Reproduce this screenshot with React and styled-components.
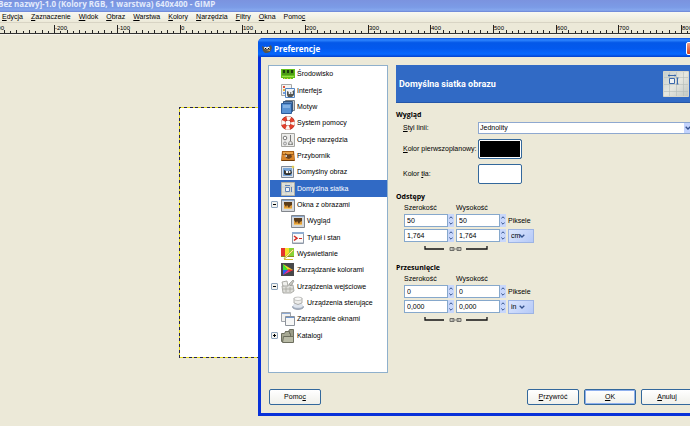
import React from 'react';
import { styled, createGlobalStyle } from 'styled-components';

const GlobalStyle = createGlobalStyle`
  * {
    box-sizing: border-box;
  }
  body {
    margin: 0;
    overflow: hidden;
    background-color: #ece9d8;
    color: #000000;
    font-family: 'Liberation Sans', Arial, sans-serif;
    font-size: 7px;
    line-height: 10px;
  }
  button,
  input,
  select {
    margin: 0;
    padding: 0;
    font: inherit;
    color: inherit;
  }
`;

const MENU = [
  ['', 'E', 'dycja'],
  ['', 'Z', 'aznaczenie'],
  ['', 'W', 'idok'],
  ['', 'O', 'braz'],
  ['', 'W', 'arstwa'],
  ['', 'K', 'olory'],
  ['', 'N', 'arzędzia'],
  ['', 'F', 'iltry'],
  ['', 'O', 'kna'],
  ['Pomo', 'c', ''],
];

const TREE = [
  { icon: 'board', label: 'Środowisko' },
  { icon: 'interface', label: 'Interfejs' },
  { icon: 'theme', label: 'Motyw' },
  { icon: 'help', label: 'System pomocy' },
  { icon: 'options', label: 'Opcje narzędzia' },
  { icon: 'toolbox', label: 'Przybornik' },
  { icon: 'image', label: 'Domyślny obraz' },
  { icon: 'grid', label: 'Domyślna siatka', selected: true },
  { icon: 'picture', label: 'Okna z obrazami', toggle: 'minus' },
  { icon: 'picture', label: 'Wygląd', child: true },
  { icon: 'title', label: 'Tytuł i stan', child: true },
  { icon: 'display', label: 'Wyświetlanie' },
  { icon: 'colors', label: 'Zarządzanie kolorami' },
  { icon: 'input', label: 'Urządzenia wejściowe', toggle: 'minus' },
  { icon: 'controller', label: 'Urządzenia sterujące', child: true },
  { icon: 'windows', label: 'Zarządzanie oknami' },
  { icon: 'folders', label: 'Katalogi', toggle: 'plus' },
];

const ICONS = {
  board: (
    <>
      <path d="M0 2h14v9h-2v1H2v-1H0z" fill="#64c018" />
      <path d="M1 3h12v5H1z" fill="#4c9c14" />
      <path d="M2 3h2v3H2zM6 3h2v3H6zM10 3h2v3h-2z" fill="#1d3c0c" />
      <path d="M1 9h12v1H1z" fill="#9ae048" />
      <path d="M3 11h1v1H3zM6 11h1v1H6zM9 11h1v1H9z" fill="#e4c834" />
    </>
  ),
  interface: (
    <>
      <path d="M.5 0.500h10v11H.5z" fill="#f4f4f2" stroke="#a8a8a8" />
      <path d="M2 2h2v2H2z" fill="#e05038" />
      <path d="M2 5h2v2H2z" fill="#e8b23c" />
      <path d="M2 8h2v2H2z" fill="#7aa0dc" />
      <path d="M4.500 4.500h9v9h-9z" fill="#f2f4f8" stroke="#5487c4" />
      <path d="M6 7l2 1h3l2-2v5l-2 2H7l-1-2z" fill="#555550" />
      <circle cx="8.500" cy="9" r="1" fill="#fff" />
      <circle cx="11" cy="9" r="1" fill="#fff" />
    </>
  ),
  theme: (
    <>
      <path d="M4.500 0.500h9v10h-9z" fill="#c9ccd0" stroke="#7d8288" />
      <path d="M2.500 1.500h9v10h-9z" fill="#5e86b8" stroke="#35567e" />
      <path d="M.5 3.500h10v10H.5z" fill="#5a93d4" stroke="#2d5d9c" />
      <path d="M2 5h7v3H2z" fill="#83b1e4" />
    </>
  ),
  help: (
    <>
      <circle cx="7" cy="7" r="4.800" fill="none" stroke="#8a2018" strokeWidth="4.400" />
      <circle cx="7" cy="7" r="4.800" fill="none" stroke="#e4402c" strokeWidth="3.600" />
      <circle
        cx="7"
        cy="7"
        r="4.800"
        fill="none"
        stroke="#fbf6f0"
        strokeWidth="4"
        strokeDasharray="3.600 3.940"
        strokeDashoffset="1.800"
      />
    </>
  ),
  options: (
    <>
      <path d="M.5 0.500h13v13H.5z" fill="#ececea" stroke="#a4a4a0" />
      <circle cx="4" cy="5" r="1.800" fill="#fff" stroke="#777" />
      <circle cx="4" cy="10.500" r="1.500" fill="#ddd" stroke="#999" />
      <path d="M9.500 2v6" stroke="#777" />
      <path d="M7 12c0-3 1-4 2.500-4S12 9 12 12z" fill="#8a8a86" />
      <circle cx="9.500" cy="10" r="1.200" fill="#e8e8e8" />
    </>
  ),
  toolbox: (
    <>
      <path d="M1 2h12l1 10H0z" fill="#a85f14" />
      <path d="M2 3h10v2H2z" fill="#e8a044" />
      <path d="M1 6h12v5H1z" fill="#d98428" />
      <path d="M4 4l3 2 3-1 1 3-3 2-3-1z" fill="#6b4420" />
      <path d="M3 7l3-1v2z" fill="#dce4ec" />
      <path d="M1 11h12v1H1z" fill="#6e3c0c" />
    </>
  ),
  image: (
    <>
      <path d="M.5 1.500h12v11H.5z" fill="#dfe3e8" stroke="#7c8796" />
      <path d="M2 3h9v8H2z" fill="#7aa6d8" />
      <path d="M3 5l2 1h3l2-1 1 3-2 2H5L3 9z" fill="#33332f" />
      <circle cx="6" cy="7" r="1.200" fill="#fff" />
      <circle cx="8.600" cy="7" r="1" fill="#fff" />
      <path d="M12 0l.6 1.400L14 2l-1.400.6L12 4l-.6-1.400L10 2l1.400-.6z" fill="#f5d83c" />
    </>
  ),
  grid: (
    <>
      <path d="M.5 0.500h13v13H.5z" fill="#dfe1da" stroke="#aeb0a8" />
      <path d="M1 5h12M1 10h12M5 1v12M10 1v12" stroke="#bfc2ba" strokeWidth=".5" />
      <path d="M4.500 5.500h4v4h-4z" fill="#f1f4f6" stroke="#5f83b8" />
      <path d="M4 3.500h5M10.500 5v5" stroke="#5f83b8" />
    </>
  ),
  picture: (
    <>
      <path d="M.5 1.500h13v12H.5z" fill="#d6d9dd" stroke="#82868c" />
      <path d="M1 2h12v1H1z" fill="#8ca8cc" />
      <path d="M3 4h8v7H3z" fill="#e09a38" />
      <path d="M3 4h8v3L9 8 8 10 6 7 5 9 3 6z" fill="#5a3c1a" />
      <path d="M3 10h8v1H3z" fill="#f3c464" />
    </>
  ),
  title: (
    <>
      <path d="M1.500 1.500h11v11h-11z" fill="#fbfbfb" stroke="#8f99a8" />
      <path d="M1 1h12v2H1z" fill="#8fadd2" />
      <path d="M3 5l3 2.200L3 9.500" fill="none" stroke="#d42a22" strokeWidth="1.500" />
      <path d="M8 7.500h3" stroke="#d42a22" />
      <path d="M2 11h10v1H2z" fill="#c9ced6" />
    </>
  ),
  display: (
    <>
      <path d="M0 1h13v9H0z" fill="#8a8a20" />
      <path d="M0 1h5v8H0z" fill="#e4342c" />
      <path d="M4 1h5v8H4z" fill="#f4e028" />
      <path d="M8 1h5v8H8z" fill="#86d438" />
      <path d="M13 3L5 11l-2 1 1-2 8-8z" fill="#f8f4a0" stroke="#b09c20" strokeWidth=".6" />
      <path d="M3 12h9v1H3z" fill="#d6bc30" />
    </>
  ),
  colors: (
    <>
      <path d="M0 0h13v13H0z" fill="#47484a" />
      <path d="M2 1v6h5z" fill="#38e434" />
      <path d="M2 1l10 6H7z" fill="#e8e024" />
      <path d="M2 7v5l5-5z" fill="#2b60f0" />
      <path d="M2 12l10-5H7z" fill="#e82ca0" />
      <path d="M7 6l5 1-4 2z" fill="#f03420" />
    </>
  ),
  input: (
    <>
      <path d="M1 6l4-1h7l1 6-3 2H2z" fill="#dededa" stroke="#9a9a94" strokeWidth=".8" />
      <path d="M1 2l5-1 1 5H2z" fill="#efefec" stroke="#9a9a94" strokeWidth=".8" />
      <path d="M8 4l4-4 1 1-3 5z" fill="#c4c4be" stroke="#8a8a84" strokeWidth=".6" />
      <path d="M5 7v5M9 7v5M2 9h10" stroke="#a6a6a0" strokeWidth=".8" />
    </>
  ),
  controller: (
    <>
      <ellipse cx="7" cy="11" rx="5.500" ry="2.500" fill="#a9b4c4" stroke="#7c8798" strokeWidth=".6" />
      <ellipse cx="7" cy="9.500" rx="5" ry="2.300" fill="#dfe5ee" />
      <path d="M3 2h8v5q-4 3-8 0z" fill="#ededeb" stroke="#9c9c9a" strokeWidth=".8" />
      <ellipse cx="7" cy="2.800" rx="3.800" ry="1.800" fill="#f9f9f8" stroke="#a9a9a6" strokeWidth=".6" />
    </>
  ),
  windows: (
    <>
      <path d="M.5 0.500h9v9h-9z" fill="#f2f2f0" stroke="#a0a4aa" />
      <path d="M1 1h8v1H1z" fill="#8fabd4" />
      <path d="M4.500 4.500h9v9h-9z" fill="#f7f7f6" stroke="#8d939b" />
      <path d="M5 5h8v1H5z" fill="#6f97ce" />
    </>
  ),
  folders: (
    <>
      <path d="M4.500 2.500h3l1-2h4v8h-8z" fill="#9a9c88" stroke="#6c6e5e" />
      <path d="M.5 4.500h3l1-2h4v2h1v8h-9z" fill="#a7a994" stroke="#6c6e5e" />
      <path d="M2.500 7.500h10v6h-11z" fill="#b9bba6" stroke="#6c6e5e" />
    </>
  ),
};

function Icon({ name }) {
  return (
    <svg width="14" height="14" viewBox="0 0 14 14" aria-hidden="true">
      {ICONS[name]}
    </svg>
  );
}

function GridPicture() {
  return (
    <svg width="26" height="26" viewBox="0 0 26 26" aria-hidden="true">
      <defs>
        <linearGradient id="paper" x1="0" y1="0" x2="1" y2="1">
          <stop offset="0" stopColor="#c6cfce" />
          <stop offset=".5" stopColor="#e6e7e0" />
          <stop offset="1" stopColor="#bfc6c2" />
        </linearGradient>
      </defs>
      <path d="M.5.5h25v25H.5z" fill="url(#paper)" stroke="#d8d6c8" />
      <path
        d="M1 6.500h24M1 13.500h24M1 20.500h24M6.500 1v24M13.500 1v24M20.500 1v24"
        stroke="#b4bcb8"
        strokeWidth=".6"
      />
      <path d="M6.500 7.500h5v5h-5z" fill="#eef2f4" stroke="#3a68ac" />
      <path d="M5 4.500h8M6 3.500v2M12 3.500v2M14.500 7v6M13.500 7h2M13.500 13h2" stroke="#3a68ac" />
    </svg>
  );
}

function Wilber() {
  return (
    <svg width="10" height="10" viewBox="0 0 10 10" aria-hidden="true">
      <path d="M0 2l2 1h4l3-2 1 3-2 4-3 1H3L1 7z" fill="#59564c" />
      <circle cx="3.500" cy="4" r="1.300" fill="#fff" />
      <circle cx="6.300" cy="4" r="1.300" fill="#fff" />
      <path d="M3 4h1v1H3zM6 4h1v1H6z" fill="#000" />
      <path d="M4 7l4-1v1z" fill="#d9a860" />
    </svg>
  );
}

// 100 image pixels take 62.7 screen pixels at this zoom
const STEP = 62.7;
const ORIGIN = 179.5;

function Ruler() {
  const marks = [];
  for (let i = -30; i < 82; i += 1) {
    const x = Math.round(ORIGIN + (i * STEP) / 10);
    const height = i % 10 === 0 ? 8 : i % 2 === 0 ? 3 : 2;
    marks.push(<rect key={i} x={x} y={10 - height} width="1" height={height} fill="#222" />);
    if (i % 10 === 0) {
      marks.push(
        <text key={`t${i}`} x={x + 1} y="7" fontSize="6">
          {i * 10}
        </text>
      );
    }
  }
  return <StRuler aria-hidden="true">{marks}</StRuler>;
}

function TreeRow({ item }) {
  return (
    <StRow $selected={item.selected} $child={item.child}>
      <StToggleCell>
        {item.toggle && (
          <StToggle type="button" aria-label={item.label}>
            <svg width="5" height="5" viewBox="0 0 5 5">
              <path
                d={item.toggle === 'plus' ? 'M1 2.500h3M2.500 1v3' : 'M1 2.500h3'}
                stroke="#000"
              />
            </svg>
          </StToggle>
        )}
      </StToggleCell>
      <Icon name={item.icon} />
      <span>{item.label}</span>
    </StRow>
  );
}

function SpinEntry({ label, value }) {
  return (
    <StSpin>
      <StInput type="text" aria-label={label} defaultValue={value} />
      <StSpinButtons>
        <StSpinButton type="button" aria-label={`${label} +`}>
          <svg width="4" height="3" viewBox="0 0 4 3">
            <path d="M.3 2.500L2 .8l1.700 1.700" fill="none" stroke="#34518c" />
          </svg>
        </StSpinButton>
        <StSpinButton type="button" aria-label={`${label} -`}>
          <svg width="4" height="3" viewBox="0 0 4 3">
            <path d="M.3.5L2 2.200 3.700.5" fill="none" stroke="#34518c" />
          </svg>
        </StSpinButton>
      </StSpinButtons>
    </StSpin>
  );
}

function SizeGroup({ title, pixels, value, unit }) {
  return (
    <section>
      <StSectionTitle>{title}</StSectionTitle>
      <StSizeGrid>
        <span>Szerokość</span>
        <span>Wysokość</span>
        <span />
        <SpinEntry label="Szerokość" value={pixels} />
        <SpinEntry label="Wysokość" value={pixels} />
        <span>Piksele</span>
        <SpinEntry label="Szerokość" value={value} />
        <SpinEntry label="Wysokość" value={value} />
        <StUnit>
          <StUnitSelect aria-label={title} defaultValue={unit}>
            <option>{unit}</option>
          </StUnitSelect>
          <StUnitArrow>
            <Chevron />
          </StUnitArrow>
        </StUnit>
      </StSizeGrid>
      <StChain type="button" aria-label={title}>
        <svg width="64" height="8" viewBox="0 0 64 8">
          <path d="M1 1v3h19M63 1v3H42" fill="none" stroke="#111" strokeWidth="1.300" />
          <path d="M26 2.500h4v3h-4zM33 2.500h4v3h-4z" fill="#c9c8c0" stroke="#6f6f6a" />
          <path d="M28 4h7" stroke="#8a8a84" />
        </svg>
      </StChain>
    </section>
  );
}

function Chevron() {
  return (
    <svg width="6" height="4" viewBox="0 0 6 4" aria-hidden="true">
      <path d="M.7.7L3 3 5.300.7" fill="none" stroke="#34518c" strokeWidth="1.300" />
    </svg>
  );
}

function Preferences() {
  return (
    <StDialog role="dialog" aria-label="Preferencje">
      <StDialogBar>
        <Wilber />
        <StDialogTitle>Preferencje</StDialogTitle>
        <StClose type="button" aria-label="Zamknij" />
      </StDialogBar>
      <StDialogBody>
        <StColumns>
          <StTree>
            {TREE.map((item) => (
              <TreeRow key={item.label} item={item} />
            ))}
          </StTree>
          <StPage>
            <StBanner>
              <StBannerTitle>Domyślna siatka obrazu</StBannerTitle>
              <GridPicture />
            </StBanner>
            <StSectionTitle>Wygląd</StSectionTitle>
            <StForm>
              <label htmlFor="line-style">
                <u>S</u>tyl linii:
              </label>
              <StCombo>
                <StComboSelect id="line-style" defaultValue="Jednolity">
                  <option>Jednolity</option>
                </StComboSelect>
                <StComboArrow>
                  <Chevron />
                </StComboArrow>
              </StCombo>
              <label htmlFor="foreground">
                <u>K</u>olor pierwszoplanowy:
              </label>
              <StSwatch id="foreground" type="button" $color="#000000" />
              <label htmlFor="background">
                Kolor <u>t</u>ła:
              </label>
              <StSwatch id="background" type="button" $color="#ffffff" />
            </StForm>
            <SizeGroup title="Odstępy" pixels="50" value="1,764" unit="cm" />
            <SizeGroup title="Przesunięcie" pixels="0" value="0,000" unit="in" />
          </StPage>
        </StColumns>
        <StActions>
          <StButton type="button">
            Pomo<u>c</u>
          </StButton>
          <StActionGroup>
            <StButton type="button">
              <u>P</u>rzywróć
            </StButton>
            <StButton type="button" $primary>
              <u>O</u>K
            </StButton>
            <StButton type="button">
              <u>A</u>nuluj
            </StButton>
          </StActionGroup>
        </StActions>
      </StDialogBody>
    </StDialog>
  );
}

function App() {
  return (
    <StWindow>
      <GlobalStyle />
      <StTitleBar>
        <StTitle>Bez nazwy]-1.0 (Kolory RGB, 1 warstwa) 640x400 - GIMP</StTitle>
      </StTitleBar>
      <StMenuBar>
        {MENU.map(([before, key, after]) => (
          <StMenuItem type="button" key={before + key + after}>
            {before}
            <u>{key}</u>
            {after}
          </StMenuItem>
        ))}
      </StMenuBar>
      <Ruler />
      <StWorkspace>
        <StCanvas />
      </StWorkspace>
      <Preferences />
    </StWindow>
  );
}

export default App;

const StWindow = styled.div`
  position: relative;
  display: flex;
  flex-direction: column;
  height: 100vh;
  overflow: hidden;
`;

const StTitleBar = styled.header`
  height: 12px;
  background: linear-gradient(#7b93df, #7b9be6 60%, #86a8ee 85%, #6a82d4);
`;

const StTitle = styled.div`
  margin-left: -2px;
  color: #e3ebfc;
  font-family: 'Open Sans', sans-serif;
  font-size: 8px;
  font-weight: 700;
  line-height: 8px;
  white-space: nowrap;
`;

const StMenuBar = styled.nav`
  display: flex;
  gap: 8px;
  height: 11px;
  padding-left: 2px;
  border-bottom: 1px solid #d8d4c4;
  background: linear-gradient(#f8f8f2, #ece9d8);
`;

const StMenuItem = styled.button`
  border: none;
  background: none;
  white-space: nowrap;
`;

const StRuler = styled.svg`
  width: 100%;
  height: 11px;
  flex-shrink: 0;
  border-bottom: 1px solid #333333;
  background-color: #ece9d8;
`;

const StWorkspace = styled.main`
  flex: 1;
  padding: 72px 0 0 179px;
  border-top: 1px solid #f6f4ea;
`;

const StCanvas = styled.div`
  width: 402px;
  height: 251px;
  padding: 1px;
  background:
    linear-gradient(#ffffff, #ffffff) content-box,
    repeating-linear-gradient(135deg, #26264c 0 2px, #e8dc20 2px 4px);
`;

const StDialog = styled.div`
  position: absolute;
  top: 38px;
  right: -13px;
  left: 258px;
  border: 3px solid #0831d9;
  border-top: none;
  border-radius: 5px 5px 0 0;
  background-color: #ece9d8;
`;

const StDialogBar = styled.div`
  display: flex;
  align-items: center;
  gap: 2px;
  height: 19px;
  margin: 0 -3px;
  padding: 2px 4px 0;
  border-radius: 5px 5px 0 0;
  background: linear-gradient(#0a4fe0, #2f86ff 10%, #0458e8 25%, #0359ee 55%, #0668ff 85%, #0340cc);
`;

const StDialogTitle = styled.h1`
  flex: 1;
  margin: 0;
  color: #ffffff;
  font-family: 'Open Sans', sans-serif;
  font-size: 8px;
  line-height: 10px;
`;

const StClose = styled.button`
  width: 13px;
  height: 13px;
  border: 1px solid #ffffff;
  border-radius: 2px;
  background: linear-gradient(#f0a088, #d8431c);
`;

const StDialogBody = styled.div`
  padding: 8px 7px;
`;

const StColumns = styled.div`
  display: flex;
  gap: 8px;
`;

const StTree = styled.ul`
  display: grid;
  grid-template-rows: repeat(17, 1fr);
  width: 120px;
  height: 308px;
  margin: 0;
  padding: 0 0 28px;
  border: 1px solid #8fb0cc;
  background-color: #ffffff;
  list-style: none;
`;

const StRow = styled.li`
  display: flex;
  align-items: center;
  gap: 2px;
  margin-left: 1px;
  padding-left: ${(props) => (props.$child ? '11px' : '1px')};
  color: ${(props) => (props.$selected ? '#ffffff' : '#000000')};
  background-color: ${(props) => (props.$selected ? '#316ac5' : 'transparent')};
  white-space: nowrap;
`;

const StToggleCell = styled.span`
  display: flex;
  width: 8px;
`;

const StToggle = styled.button`
  display: flex;
  width: 7px;
  height: 7px;
  border: 1px solid #8ea4bc;
  border-radius: 1px;
  background-color: #f4f3ee;
`;

const StPage = styled.div`
  flex: 1;
  min-width: 0;
`;

const StBanner = styled.header`
  display: flex;
  align-items: center;
  justify-content: space-between;
  height: 38px;
  margin-bottom: 7px;
  padding: 0 4px 0 3px;
  border-bottom: 1px solid #2456a8;
  color: #ffffff;
  background-color: #316ac5;
`;

const StBannerTitle = styled.h2`
  margin: 0;
  font-family: Roboto, sans-serif;
  font-size: 9px;
  line-height: 12px;
`;

const StSectionTitle = styled.h3`
  margin: 0;
  font-family: 'Open Sans', sans-serif;
  font-size: 7px;
  line-height: 10px;
`;

const StForm = styled.div`
  display: grid;
  grid-template-columns: 70px 1fr;
  grid-template-rows: 12px 20px 20px;
  align-items: center;
  gap: 5px;
  margin: 2px 0 8px;
  padding-left: 7px;
  white-space: nowrap;
`;

const StCombo = styled.div`
  display: flex;
  height: 12px;
  border: 1px solid #8ea8d0;
  background-color: #ffffff;
`;

const StComboSelect = styled.select`
  flex: 1;
  min-width: 0;
  padding-left: 1px;
  border: none;
  background: none;
  appearance: none;
`;

const StComboArrow = styled.span`
  display: flex;
  align-items: center;
  justify-content: center;
  width: 8px;
  background-color: #c3d3fd;
  pointer-events: none;
`;

const StSwatch = styled.button`
  width: 44px;
  height: 20px;
  border: 1px solid #33689c;
  border-radius: 2px;
  background-color: ${(props) => props.$color};
  box-shadow: inset 0 0 0 1px #ffffff;
`;

const StSizeGrid = styled.div`
  display: grid;
  grid-template-columns: 50px 50px 26px;
  grid-template-rows: 8px 13px 13px;
  align-items: center;
  gap: 2px;
  margin-top: 2px;
  padding-left: 8px;
`;

const StSpin = styled.div`
  display: flex;
  height: 13px;
`;

const StInput = styled.input`
  width: 44px;
  padding-left: 2px;
  border: 1px solid #86a8cc;
  background-color: #ffffff;
`;

const StSpinButtons = styled.span`
  display: flex;
  flex-direction: column;
  width: 6px;
`;

const StSpinButton = styled.button`
  display: flex;
  flex: 1;
  align-items: center;
  justify-content: center;
  border: none;
  background-color: #c8d7fb;
`;

const StUnit = styled.div`
  position: relative;
  height: 14px;
`;

const StUnitSelect = styled.select`
  width: 26px;
  height: 14px;
  padding-left: 2px;
  border: 1px solid #9db4e4;
  background: linear-gradient(135deg, #dce6fe, #b5c9f7);
  appearance: none;
`;

const StUnitArrow = styled.span`
  position: absolute;
  top: 5px;
  left: 11px;
  display: flex;
  pointer-events: none;
`;

const StChain = styled.button`
  display: flex;
  margin: 3px 0 10px 28px;
  border: none;
  background: none;
`;

const StActions = styled.footer`
  display: flex;
  justify-content: space-between;
  padding: 16px 0 0 1px;
`;

const StActionGroup = styled.div`
  display: flex;
  gap: 5px;
`;

const StButton = styled.button`
  width: 52px;
  height: 16px;
  border: 1px solid #33689c;
  border-radius: 2px;
  background: linear-gradient(#ffffff, #f0f0ea);
  box-shadow: ${(props) => (props.$primary ? 'inset 0 0 0 1px #8fb0ee' : 'none')};
`;
